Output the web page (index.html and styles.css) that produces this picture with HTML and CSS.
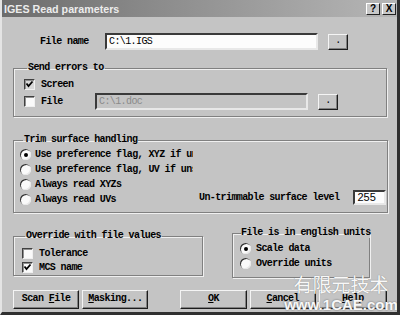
FILE: index.html
```html
<!DOCTYPE html>
<html lang="en">
<head>
  <meta charset="UTF-8">
  <title>IGES Read parameters</title>
  <link rel="stylesheet" href="styles.css">
</head>
<body>
  <div class="window">
    <div class="titlebar">
      <span class="title">IGES Read parameters</span>
      <div class="caption-btns">
        <span class="cap-btn">?</span>
        <span class="cap-btn close">X</span>
      </div>
    </div>

    <div class="content">
      <div class="file-row">
        <span class="file-label">File name</span>
        <div class="field">C:\1.IGS</div>
        <div class="btn browse">.</div>
      </div>

      <fieldset class="group errors">
        <legend>Send errors to</legend>
        <div class="opt-row">
          <span class="check checked gray"></span><span>Screen</span>
        </div>
        <div class="opt-row file-out">
          <span class="check"></span><span class="check-text">File</span>
          <div class="field disabled">C:\1.doc</div>
          <div class="btn browse">.</div>
        </div>
      </fieldset>

      <fieldset class="group trim">
        <legend>Trim surface handling</legend>
        <div class="trim-body">
          <div class="radios">
            <div class="opt-row"><span class="radio on"></span><span class="clip">Use preference flag, XYZ if unspecified</span></div>
            <div class="opt-row"><span class="radio"></span><span class="clip">Use preference flag, UV if unspecified</span></div>
            <div class="opt-row"><span class="radio"></span><span>Always read XYZs</span></div>
            <div class="opt-row"><span class="radio"></span><span>Always read UVs</span></div>
          </div>
          <div class="level">
            <span>Un-trimmable surface level</span>
            <div class="field small">255</div>
          </div>
        </div>
      </fieldset>

      <div class="lower">
        <fieldset class="group override">
          <legend>Override with file values</legend>
          <div class="opt-row"><span class="check"></span><span>Tolerance</span></div>
          <div class="opt-row"><span class="check checked"></span><span>MCS name</span></div>
        </fieldset>
        <fieldset class="group units">
          <legend>File is in english units</legend>
          <div class="opt-row"><span class="radio on"></span><span>Scale data</span></div>
          <div class="opt-row"><span class="radio"></span><span>Override units</span></div>
        </fieldset>
      </div>

      <div class="buttons">
        <div class="btn action">Scan <u>F</u>ile</div>
        <div class="btn action"><u>M</u>asking...</div>
        <div class="btn action ok"><u>O</u>K</div>
        <div class="btn action"><u>C</u>ancel</div>
        <div class="btn action help"><u>H</u>elp</div>
      </div>
    </div>

    <div class="watermark">
      <div class="wm-cn">有限元技术</div>
      <div class="wm-url">www.1CAE.com</div>
    </div>
  </div>
</body>
</html>
```

FILE: styles.css
```css
body {
  margin: 0;
  font-family: "Liberation Mono", monospace;
  font-size: 10px;
  font-weight: bold;
  letter-spacing: -0.6px;
  color: #000;
  background: #c4c4c4;
}

.window {
  position: relative;
  width: 400px;
  height: 315px;
  box-sizing: border-box;
  background: #c4c4c4;
  border-left: 2px solid #e4e4e4;
  border-right: 3px solid #303030;
  border-bottom: 3px solid #303030;
  overflow: hidden;
}

.titlebar {
  height: 17px;
  display: flex;
  align-items: center;
  justify-content: space-between;
  background: linear-gradient(to right, #6c6c6c, #8c8c8c 40%, #b6b6b6);
  padding: 0 0 0 2px;
}

.title {
  font-family: "Liberation Sans", Arial, sans-serif;
  font-size: 10.7px;
  font-weight: bold;
  letter-spacing: 0;
  color: #ececec;
}

.caption-btns {
  display: flex;
  gap: 2px;
  margin-right: 1px;
}

.cap-btn {
  width: 14px;
  height: 12px;
  box-sizing: border-box;
  background: #c8c8c8;
  border: 1px solid;
  border-color: #fff #202020 #202020 #fff;
  font-family: "Liberation Sans", Arial, sans-serif;
  font-size: 10px;
  line-height: 10px;
  letter-spacing: 0;
  text-align: center;
}

.content {
  padding: 0 10px 0 11px;
}

.file-row {
  display: flex;
  align-items: center;
  margin-top: 16px;
  height: 17px;
}

.file-label {
  width: 65px;
  padding-left: 27px;
}

.field {
  width: 213px;
  height: 17px;
  box-sizing: border-box;
  background: #fcfcfc;
  border: 2px solid;
  border-color: #3a3a3a #e8e8e8 #e8e8e8 #3a3a3a;
  font-weight: normal;
  line-height: 13px;
  padding-left: 2px;
  white-space: nowrap;
}

.field.disabled {
  background: #c4c4c4;
  color: #8a8a8a;
}

.field.small {
  width: 33px;
  height: 15px;
  line-height: 11px;
  font-family: "Liberation Sans", Arial, sans-serif;
  font-size: 11px;
  letter-spacing: 0;
}

.btn {
  box-sizing: border-box;
  background: #c4c4c4;
  border: 1px solid;
  border-color: #f4f4f4 #1c1c1c #1c1c1c #f4f4f4;
  box-shadow: inset -1px -1px 0 #808080;
  text-align: center;
}

.browse {
  width: 20px;
  height: 16px;
  margin-left: 10px;
  line-height: 12px;
  font-weight: normal;
}

.group {
  margin: 0;
  min-width: 0;
  border: 1px solid #808080;
  box-shadow: inset 1px 1px 0 #f0f0f0, 1px 1px 0 #f0f0f0;
}

.group legend {
  padding: 0 1px;
  margin-left: 3px;
  line-height: 10px;
  white-space: nowrap;
}

.errors {
  margin-top: 13px;
  padding: 3px 0 6px 10px;
  width: 374px;
  box-sizing: border-box;
}

.opt-row {
  display: flex;
  align-items: center;
  height: 17px;
  white-space: nowrap;
}

.check {
  width: 11px;
  height: 11px;
  box-sizing: border-box;
  background: #fafafa;
  border: 1px solid;
  border-color: #404040 #f0f0f0 #f0f0f0 #404040;
  box-shadow: inset 1px 1px 0 #909090;
  margin-right: 6px;
  flex: none;
}

.check.gray {
  background: #d8d8d8;
}

.check.checked {
  background-image: url("data:image/svg+xml,%3Csvg xmlns='http://www.w3.org/2000/svg' viewBox='0 0 9 9'%3E%3Cpath d='M1.5 3.5 L3.5 6 L7.5 1.5' fill='none' stroke='%23000' stroke-width='1.8'/%3E%3C/svg%3E");
  background-size: 9px 9px;
  background-repeat: no-repeat;
}

.file-out .check-text {
  width: 54px;
}

.trim {
  margin-top: 18px;
  padding: 2px 0 5px 6px;
  width: 375px;
  box-sizing: border-box;
}

.trim-body {
  display: flex;
  align-items: flex-end;
}

.trim .opt-row {
  height: 15px;
}

.radios {
  width: 179px;
}

.clip {
  width: 158px;
  overflow: hidden;
}

.radio {
  width: 11px;
  height: 11px;
  box-sizing: border-box;
  border-radius: 50%;
  background: #fafafa;
  box-shadow: inset 1px 1px 0 #303030, inset -1px -1px 0 #e8e8e8;
  margin-right: 4px;
  flex: none;
  display: flex;
  align-items: center;
  justify-content: center;
}

.radio.on::after {
  content: "";
  width: 4px;
  height: 4px;
  border-radius: 50%;
  background: #000;
}

.level {
  display: flex;
  align-items: center;
  gap: 14px;
  height: 17px;
  margin-bottom: 1px;
}

.lower {
  display: flex;
  align-items: flex-start;
  gap: 29px;
  margin-top: 15px;
}

.override {
  margin-top: 3px;
  width: 190px;
  box-sizing: border-box;
  padding: 5px 0 1px 8px;
}

.override .opt-row {
  height: 14px;
}

.units {
  width: 138px;
  box-sizing: border-box;
  padding: 3px 0 6px 7px;
}

.units legend {
  margin-left: 1px;
  padding: 0;
}

.units .opt-row {
  height: 15px;
}

.units .radio {
  margin-right: 5px;
}

.buttons {
  display: flex;
  margin-top: 12px;
}

.action {
  width: 67px;
  height: 19px;
  line-height: 16px;
  margin-right: 3px;
}

.action.ok {
  margin-left: 29px;
}

.action.help {
  width: 69px;
  margin-right: 0;
}

.watermark {
  position: absolute;
  left: 280px;
  top: 273px;
  width: 118px;
  text-align: center;
  color: #f8f8f8;
  pointer-events: none;
}

.wm-cn {
  font-family: "Noto Sans CJK SC", sans-serif;
  font-size: 19px;
  font-weight: normal;
  letter-spacing: 0;
  line-height: 22px;
  text-shadow: 0 0 1px #707070;
}

.wm-url {
  font-family: "Liberation Sans", Arial, sans-serif;
  font-size: 15px;
  font-weight: bold;
  letter-spacing: 0;
  line-height: 14px;
  margin-top: 3px;
  text-shadow: 0 0 2px #606060;
}
```
